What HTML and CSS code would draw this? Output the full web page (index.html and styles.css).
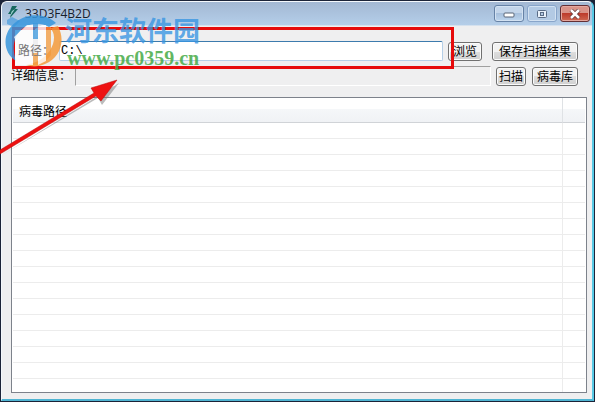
FILE: index.html
```
<!DOCTYPE html>
<html lang="zh-CN">
<head>
  <meta charset="UTF-8">
  <title>33D3F4B2D</title>
  <meta name="viewport" content="width=device-width, initial-scale=1.0">
  <link rel="stylesheet" href="styles.css">
</head>
<body>
  <div class="window">
    <header class="titlebar">
      <svg class="app-icon" width="12" height="14" viewBox="0 0 12 14"><path d="M5 1h5L8 4h3L3 13l1-4H1l2-3z" fill="#17685f"/><path d="M5 6l3-2-2 3-2 3 0-2z" fill="#9fd0cf"/></svg>
      <span class="title">33D3F4B2D</span>
      <div class="win-btns">
        <button class="win-btn" aria-label="最小化"><svg width="12" height="8" viewBox="0 0 12 8"><rect x="1" y="3" width="10" height="4" rx="1" fill="#fff" stroke="#596477"/></svg></button>
        <button class="win-btn win-max" aria-label="最大化"><svg width="12" height="10" viewBox="0 0 12 10"><rect x="1.5" y="1.5" width="9" height="7" rx="1" fill="#e9f1fa" stroke="#596b85"/><rect x="4.500" y="3.500" width="3" height="3" fill="#b4cae3" stroke="#596b85"/></svg></button>
        <button class="win-btn win-close" aria-label="关闭"><svg width="12" height="10" viewBox="0 0 12 10"><path d="M2 1l8 8M10 1L2 9" stroke="#5d3436" stroke-width="4"/><path d="M2 1l8 8M10 1L2 9" stroke="#fff" stroke-width="2.500"/></svg></button>
      </div>
    </header>
    <main class="content">
      <div class="row">
        <label class="path-label" for="path">路径：</label>
        <input class="path-input" id="path" type="text" value="C:\">
        <button class="btn btn-browse">浏览</button>
        <button class="btn btn-save">保存扫描结果</button>
      </div>
      <div class="row row-info">
        <label class="info-label" for="info">详细信息：</label>
        <input class="info" id="info" type="text" readonly>
        <button class="btn btn-scan">扫描</button>
        <button class="btn btn-lib">病毒库</button>
      </div>
      <div class="list">
        <table class="grid">
          <thead><tr><th>病毒路径</th><th class="col-end"></th></tr></thead>
          <tbody>
            <tr><td></td><td></td></tr>
            <tr><td></td><td></td></tr>
            <tr><td></td><td></td></tr>
            <tr><td></td><td></td></tr>
            <tr><td></td><td></td></tr>
            <tr><td></td><td></td></tr>
            <tr><td></td><td></td></tr>
            <tr><td></td><td></td></tr>
            <tr><td></td><td></td></tr>
            <tr><td></td><td></td></tr>
            <tr><td></td><td></td></tr>
            <tr><td></td><td></td></tr>
            <tr><td></td><td></td></tr>
            <tr><td></td><td></td></tr>
            <tr><td></td><td></td></tr>
            <tr><td></td><td></td></tr>
            <tr><td></td><td></td></tr>
          </tbody>
        </table>
      </div>
    </main>
  </div>

  <!-- 标注和水印 -->
  <div class="mark-box"></div>
  <svg class="mark-arrow" width="130" height="90" viewBox="0 0 130 90">
    <path d="M2 85L98 28l4 7 17-22z" fill="#777" opacity=".5"/>
    <path d="M0 80L94 23l-3-5 26-8-16 21-5-5L0 84z" fill="#ee1111" stroke="#b70d0d" stroke-width=".5"/>
  </svg>
  <div class="watermark">
    <svg class="wm-logo" width="58" height="54" viewBox="0 0 58 54">
      <path d="M11 46C-3 37-3 17 11 7 24-3 42-1 51 8L44 12C34 6 22 9 16 15 8 23 7 34 11 46z" fill="#3795dc" opacity=".85"/>
      <path d="M53 11C61 26 55 43 40 49 33 52 27 52 21 50 37 47 45 38 48 29 50 22 49 17 45 13z" fill="#f39a3b" opacity=".85"/>
      <path d="M9 22L22 10H28V50H10V24z" fill="#fff" opacity=".8"/>
      <path d="M30 14L37 10H41V46L33 50V22H30z" fill="#fff" opacity=".8"/>
      <path d="M28 8H33V24H28z" fill="#3795dc" opacity=".75"/>
      <path d="M28 38H33V50H28zM41 12H46V40L41 46z" fill="#f39a3b" opacity=".75"/>
      <path d="M2 5l5-3 8 4-6 6-7-3z" fill="#3795dc" opacity=".6"/>
    </svg>
    <div class="wm-text">
      <span class="wm-name">河东软件园</span>
      <span class="wm-url">www.pc0359.cn</span>
    </div>
  </div>
</body>
</html>
```
FILE: styles.css
```
* { box-sizing: border-box; }
body {
  margin: 0; height: 100vh; padding: 1px; background: #1b2338; overflow: hidden;
  font: 12px/16px "Liberation Sans", "Noto Sans CJK SC", sans-serif; color: #000;
}
button, input { font: inherit; color: inherit; margin: 0; }
.window {
  display: flex; flex-direction: column; height: 100%; background: #efeff0;
  border: 1px solid #f4f8fc; border-right: 2px solid #58c9e5; border-bottom: 2px solid #4fb4d2;
  border-radius: 6px 6px 0 0;
}
/* 标题栏 */
.titlebar {
  display: flex; align-items: center; height: 24px; padding: 0 2px 0 5px; flex: none;
  background: linear-gradient(#a3b8d3, #b4cee9); border-bottom: 1px solid #d5e1ee; border-radius: 5px 5px 0 0;
}
.app-icon { align-self: flex-start; margin-top: 3px; }
.title { flex: 1; margin-left: 6px; font-family: "Open Sans", sans-serif; color: #17202c; }
.win-btns { display: flex; gap: 3px; align-self: flex-start; padding-top: 3px; }
.win-btn {
  display: flex; align-items: center; justify-content: center; width: 30px; height: 17px; padding: 0;
  border: 1px solid #6682a6; border-radius: 3px; box-shadow: inset 0 0 0 1px #d3e2f2;
  background: linear-gradient(#c3d5ea 50%, #a7c0dc 50%, #bdd5ee);
}
.win-max { border-color: #88a5ca; background: #b3cae4; }
.win-close {
  border-color: #632f35; box-shadow: inset 0 0 0 1px #e5a79e;
  background: linear-gradient(#d99389 50%, #bd3b2c 50%, #cf6852);
}
/* 内容 */
.content { display: flex; flex-direction: column; flex: 1; min-height: 0; padding: 15px 5px 6px 9px; }
.row { display: flex; align-items: center; height: 20px; padding-right: 9px; flex: none; }
.row-info { margin-top: 5px; }
.path-label { position: relative; z-index: 2; width: 48px; padding-left: 7px; color: #777; white-space: nowrap; overflow: hidden; }
.path-input {
  flex: 1; min-width: 0; height: 20px; padding: 0 1px; background: #fff;
  border: 1px solid #b5cfe7; border-top-color: #3d7bad; border-radius: 2px; font-family: "Liberation Mono", monospace;
}
.info-label { width: 64px; white-space: nowrap; }
.info {
  flex: 1; min-width: 0; height: 20px; padding: 0 2px; background: #efeff0;
  border: 1px solid #a0a0a0; border-right-color: #fff; border-bottom-color: #fff;
}
.btn {
  height: 19px; padding: 1px 0 0; line-height: 16px; white-space: nowrap; flex: none;
  border: 1px solid #707070; border-radius: 3px; box-shadow: inset 0 0 0 1px #fbfbfb;
  background: linear-gradient(#f2f2f2 50%, #dedede 50%, #d0d0d0);
}
.btn-browse { width: 34px; margin-left: 5px; }
.btn-save { width: 86px; margin-left: 10px; }
.btn-scan { width: 30px; margin-left: 5px; }
.btn-lib { width: 46px; margin-left: 6px; }
/* 列表 */
.list {
  flex: 1; min-height: 0; margin-top: 11px; overflow: hidden; background: #fff; border: 1px solid #7d828b; padding: 0 1px;
}
.grid { width: 100%; table-layout: fixed; border-collapse: separate; border-spacing: 0; }
.grid th {
  height: 25px; padding: 4px 6px 0; text-align: left; font-weight: normal; border-bottom: 1px solid #d0d3d7;
  border-right: 1px solid #dfe2e5; background: linear-gradient(#fff 45%, #f5f7f9 45%, #f0f2f5);
}
.grid .col-end { width: 22px; border-right: none; }
.grid td { height: 16px; padding: 0; border-bottom: 1px solid #ececec; border-right: 1px solid #ececec; }
.grid td:last-child { border-right: none; }
/* 标注 */
.mark-box { position: absolute; left: 12px; right: 141px; top: 27px; height: 42px; border: 3px solid #e60b0b; }
.mark-arrow { position: absolute; left: 0; top: 70px; }
.watermark { position: absolute; left: 5px; top: 15px; display: flex; gap: 2px; pointer-events: none; }
.wm-text { display: flex; flex-direction: column; font-weight: bold; white-space: nowrap; }
.wm-name { font-family: "Noto Sans CJK SC", sans-serif; font-size: 27px; line-height: 30px; color: rgba(55, 149, 226, 0.8); }
.wm-url { margin-left: 2px; font-family: "Liberation Serif", serif; font-size: 20px; line-height: 26px; color: rgba(70, 170, 70, 0.85); }
```
